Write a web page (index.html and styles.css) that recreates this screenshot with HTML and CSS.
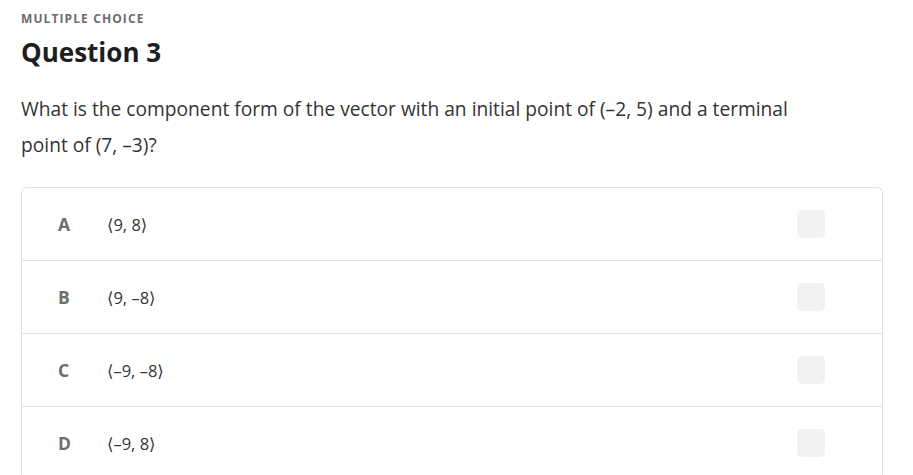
FILE: index.html
```html
<!DOCTYPE html>
<html>
<head>
<meta charset="utf-8">
<link rel="stylesheet" href="styles.css">
</head>
<body>
<div class="page">
  <div class="kicker">MULTIPLE CHOICE</div>
  <h1 class="title">Question 3</h1>
  <p class="prompt">What is the component form of the vector with an initial point of (–2, 5) and a terminal point of (7, –3)?</p>
  <div class="options">
    <div class="option"><span class="letter">A</span><span class="text">⟨9, 8⟩</span><span class="box"></span></div>
    <div class="option"><span class="letter">B</span><span class="text">⟨9, –8⟩</span><span class="box"></span></div>
    <div class="option"><span class="letter">C</span><span class="text">⟨–9, –8⟩</span><span class="box"></span></div>
    <div class="option"><span class="letter">D</span><span class="text">⟨–9, 8⟩</span><span class="box"></span></div>
  </div>
</div>
</body>
</html>
```
FILE: styles.css
```css
html, body { margin: 0; padding: 0; background: #fff; }
body { font-family: "Open Sans", "DejaVu Sans", sans-serif; color: #333; }
.page { width: 862px; margin-left: 21px; padding-top: 11px; }
.kicker { font-size: 12px; font-weight: 700; letter-spacing: 1.1px; color: #6b6b70; line-height: 15px; }
.title { margin: 9px 0 0; font-size: 26px; font-weight: 700; color: #1e1e1e; line-height: 34px; }
.prompt { margin: 22px 0 0; font-size: 19.2px; line-height: 36px; color: #333; width: 800px; }
.options { margin-top: 24px; border: 1px solid #e2e2e2; border-radius: 6px; border-bottom: none; }
.option { display: flex; align-items: center; height: 72px; border-bottom: 1px solid #e2e2e2; }
.letter { width: 49px; margin-left: 36px; font-size: 17.5px; font-weight: 700; color: #6e6e6e; }
.text { flex: 1; font-size: 16.5px; color: #333; }
.box { width: 28px; height: 28px; border-radius: 5px; background: #f2f2f2; margin-right: 57px; }
```
